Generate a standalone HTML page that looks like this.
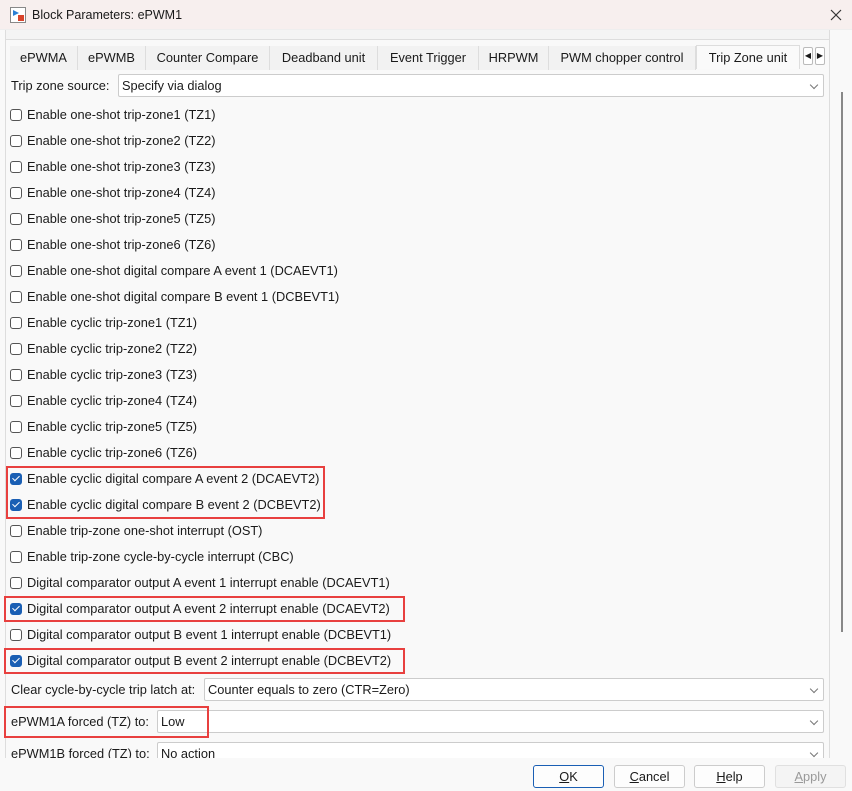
<!DOCTYPE html>
<html><head><style>
*{margin:0;padding:0;box-sizing:border-box}
body{width:852px;height:791px;overflow:hidden;background:#f9f9f9;font-family:"Liberation Sans",sans-serif;font-size:12.8px;color:#1a1a1a;position:relative}
.abs{position:absolute}
.title{left:0;top:0;width:852px;height:30px;background:#f7efee;border-bottom:1px solid #eee}
.row{position:absolute;left:10px;height:20px;line-height:21px;white-space:nowrap}
.cb{display:inline-block;width:12px;height:12px;border:1px solid #555;border-radius:3px;vertical-align:-2px;margin-right:5px;background:#fff}
.cb.on{background:#1a5fb4;border-color:#1a5fb4;position:relative}
.cb.on:after{content:"";position:absolute;left:3px;top:0px;width:3px;height:6px;border:solid #fff;border-width:0 1.5px 1.5px 0;transform:rotate(45deg)}
.red{position:absolute;border:2px solid #e8403f}
.dd{position:absolute;background:#fff;border:1px solid #ccc;border-radius:2px;height:23px;line-height:22px;padding-left:3px}
.dd:after{content:"";position:absolute;right:6px;top:7px;width:5px;height:5px;border:solid #777;border-width:0 1px 1px 0;transform:rotate(45deg)}
.lbl{position:absolute;left:11px;line-height:21px}
.tab{position:absolute;top:46px;height:24px;line-height:24px;text-align:center;border-right:1px solid #ddd;background:#f2f2f2}
.btn{position:absolute;top:765px;width:71px;height:23px;border:1px solid #ccc;border-radius:3px;background:#fdfdfd;text-align:center;line-height:21px}
</style></head><body>
<div class="abs title"></div>
<svg class="abs" style="left:10px;top:7px" width="16" height="16"><rect x="0.5" y="0.5" width="15" height="15" fill="#fff" stroke="#888"/><path d="M3 3l6 3-6 3z" fill="#2a7fd4"/><rect x="8" y="8" width="6" height="6" fill="#d9432b"/></svg>
<div class="abs" style="left:32px;top:8px;font-size:12.5px">Block Parameters: ePWM1</div>
<svg class="abs" style="left:830px;top:9px" width="12" height="12"><path d="M1 1L11 11M11 1L1 11" stroke="#333" stroke-width="1.2"/></svg>
<div class="abs" style="left:5px;top:30px;width:825px;height:10px;border:1px solid #ddd;border-top:none;background:#f4f4f4"></div>
<div class="abs" style="left:5px;top:40px;width:825px;height:720px;border-left:1px solid #ddd;border-right:1px solid #ddd"></div>
<div class="tab" style="left:10px;width:68px">ePWMA</div>
<div class="tab" style="left:78px;width:68px">ePWMB</div>
<div class="tab" style="left:146px;width:124px">Counter Compare</div>
<div class="tab" style="left:270px;width:108px">Deadband unit</div>
<div class="tab" style="left:378px;width:101px">Event Trigger</div>
<div class="tab" style="left:479px;width:70px">HRPWM</div>
<div class="tab" style="left:549px;width:147px">PWM chopper control</div>
<div class="tab" style="left:696px;width:104px;background:#fafafa;top:45px;border:1px solid #ddd;border-bottom:none">Trip Zone unit</div>
<div class="abs" style="left:803px;top:47px;width:10px;height:18px;border:1px solid #bbb;border-radius:2px;background:#fff;font-size:8px;line-height:16px;text-align:center">◀</div>
<div class="abs" style="left:815px;top:47px;width:10px;height:18px;border:1px solid #bbb;border-radius:2px;background:#fff;font-size:8px;line-height:16px;text-align:center">▶</div>
<div class="abs" style="left:841px;top:92px;width:2px;height:540px;background:#888"></div>
<div class="lbl" style="top:75px">Trip zone source:</div>
<div class="dd" style="left:118px;top:74px;width:706px">Specify via dialog</div>

<div class="row" style="top:104px"><span class="cb"></span>Enable one-shot trip-zone1 (TZ1)</div>
<div class="row" style="top:130px"><span class="cb"></span>Enable one-shot trip-zone2 (TZ2)</div>
<div class="row" style="top:156px"><span class="cb"></span>Enable one-shot trip-zone3 (TZ3)</div>
<div class="row" style="top:182px"><span class="cb"></span>Enable one-shot trip-zone4 (TZ4)</div>
<div class="row" style="top:208px"><span class="cb"></span>Enable one-shot trip-zone5 (TZ5)</div>
<div class="row" style="top:234px"><span class="cb"></span>Enable one-shot trip-zone6 (TZ6)</div>
<div class="row" style="top:260px"><span class="cb"></span>Enable one-shot digital compare A event 1 (DCAEVT1)</div>
<div class="row" style="top:286px"><span class="cb"></span>Enable one-shot digital compare B event 1 (DCBEVT1)</div>
<div class="row" style="top:312px"><span class="cb"></span>Enable cyclic trip-zone1 (TZ1)</div>
<div class="row" style="top:338px"><span class="cb"></span>Enable cyclic trip-zone2 (TZ2)</div>
<div class="row" style="top:364px"><span class="cb"></span>Enable cyclic trip-zone3 (TZ3)</div>
<div class="row" style="top:390px"><span class="cb"></span>Enable cyclic trip-zone4 (TZ4)</div>
<div class="row" style="top:416px"><span class="cb"></span>Enable cyclic trip-zone5 (TZ5)</div>
<div class="row" style="top:442px"><span class="cb"></span>Enable cyclic trip-zone6 (TZ6)</div>
<div class="row" style="top:468px"><span class="cb on"></span>Enable cyclic digital compare A event 2 (DCAEVT2)</div>
<div class="row" style="top:494px"><span class="cb on"></span>Enable cyclic digital compare B event 2 (DCBEVT2)</div>
<div class="row" style="top:520px"><span class="cb"></span>Enable trip-zone one-shot interrupt (OST)</div>
<div class="row" style="top:546px"><span class="cb"></span>Enable trip-zone cycle-by-cycle interrupt (CBC)</div>
<div class="row" style="top:572px"><span class="cb"></span>Digital comparator output A event 1 interrupt enable (DCAEVT1)</div>
<div class="row" style="top:598px"><span class="cb on"></span>Digital comparator output A event 2 interrupt enable (DCAEVT2)</div>
<div class="row" style="top:624px"><span class="cb"></span>Digital comparator output B event 1 interrupt enable (DCBEVT1)</div>
<div class="row" style="top:650px"><span class="cb on"></span>Digital comparator output B event 2 interrupt enable (DCBEVT2)</div>

<div class="red" style="left:6px;top:466px;width:319px;height:53px"></div>
<div class="red" style="left:4px;top:596px;width:401px;height:26px"></div>
<div class="red" style="left:4px;top:648px;width:401px;height:26px"></div>

<div class="lbl" style="top:679px">Clear cycle-by-cycle trip latch at:</div>
<div class="dd" style="left:204px;top:678px;width:620px">Counter equals to zero (CTR=Zero)</div>
<div class="lbl" style="top:711px">ePWM1A forced (TZ) to:</div>
<div class="dd" style="left:157px;top:710px;width:667px">Low</div>
<div class="red" style="left:4px;top:706px;width:205px;height:32px"></div>
<div class="abs" style="left:0;top:742px;width:830px;height:16px;overflow:hidden">
<div class="lbl" style="top:1px">ePWM1B forced (TZ) to:</div>
<div class="dd" style="left:157px;top:0;width:667px">No action</div>
</div>
<div class="abs" style="left:0;top:758px;width:852px;height:33px;background:#f9f9f9"></div>
<div class="btn" style="left:533px;border:1px solid #1a5fb4"><u>O</u>K</div>
<div class="btn" style="left:614px"><u>C</u>ancel</div>
<div class="btn" style="left:694px"><u>H</u>elp</div>
<div class="btn" style="left:775px;color:#999;background:#f4f4f4;border-color:#e0e0e0"><u>A</u>pply</div>
</body></html>
